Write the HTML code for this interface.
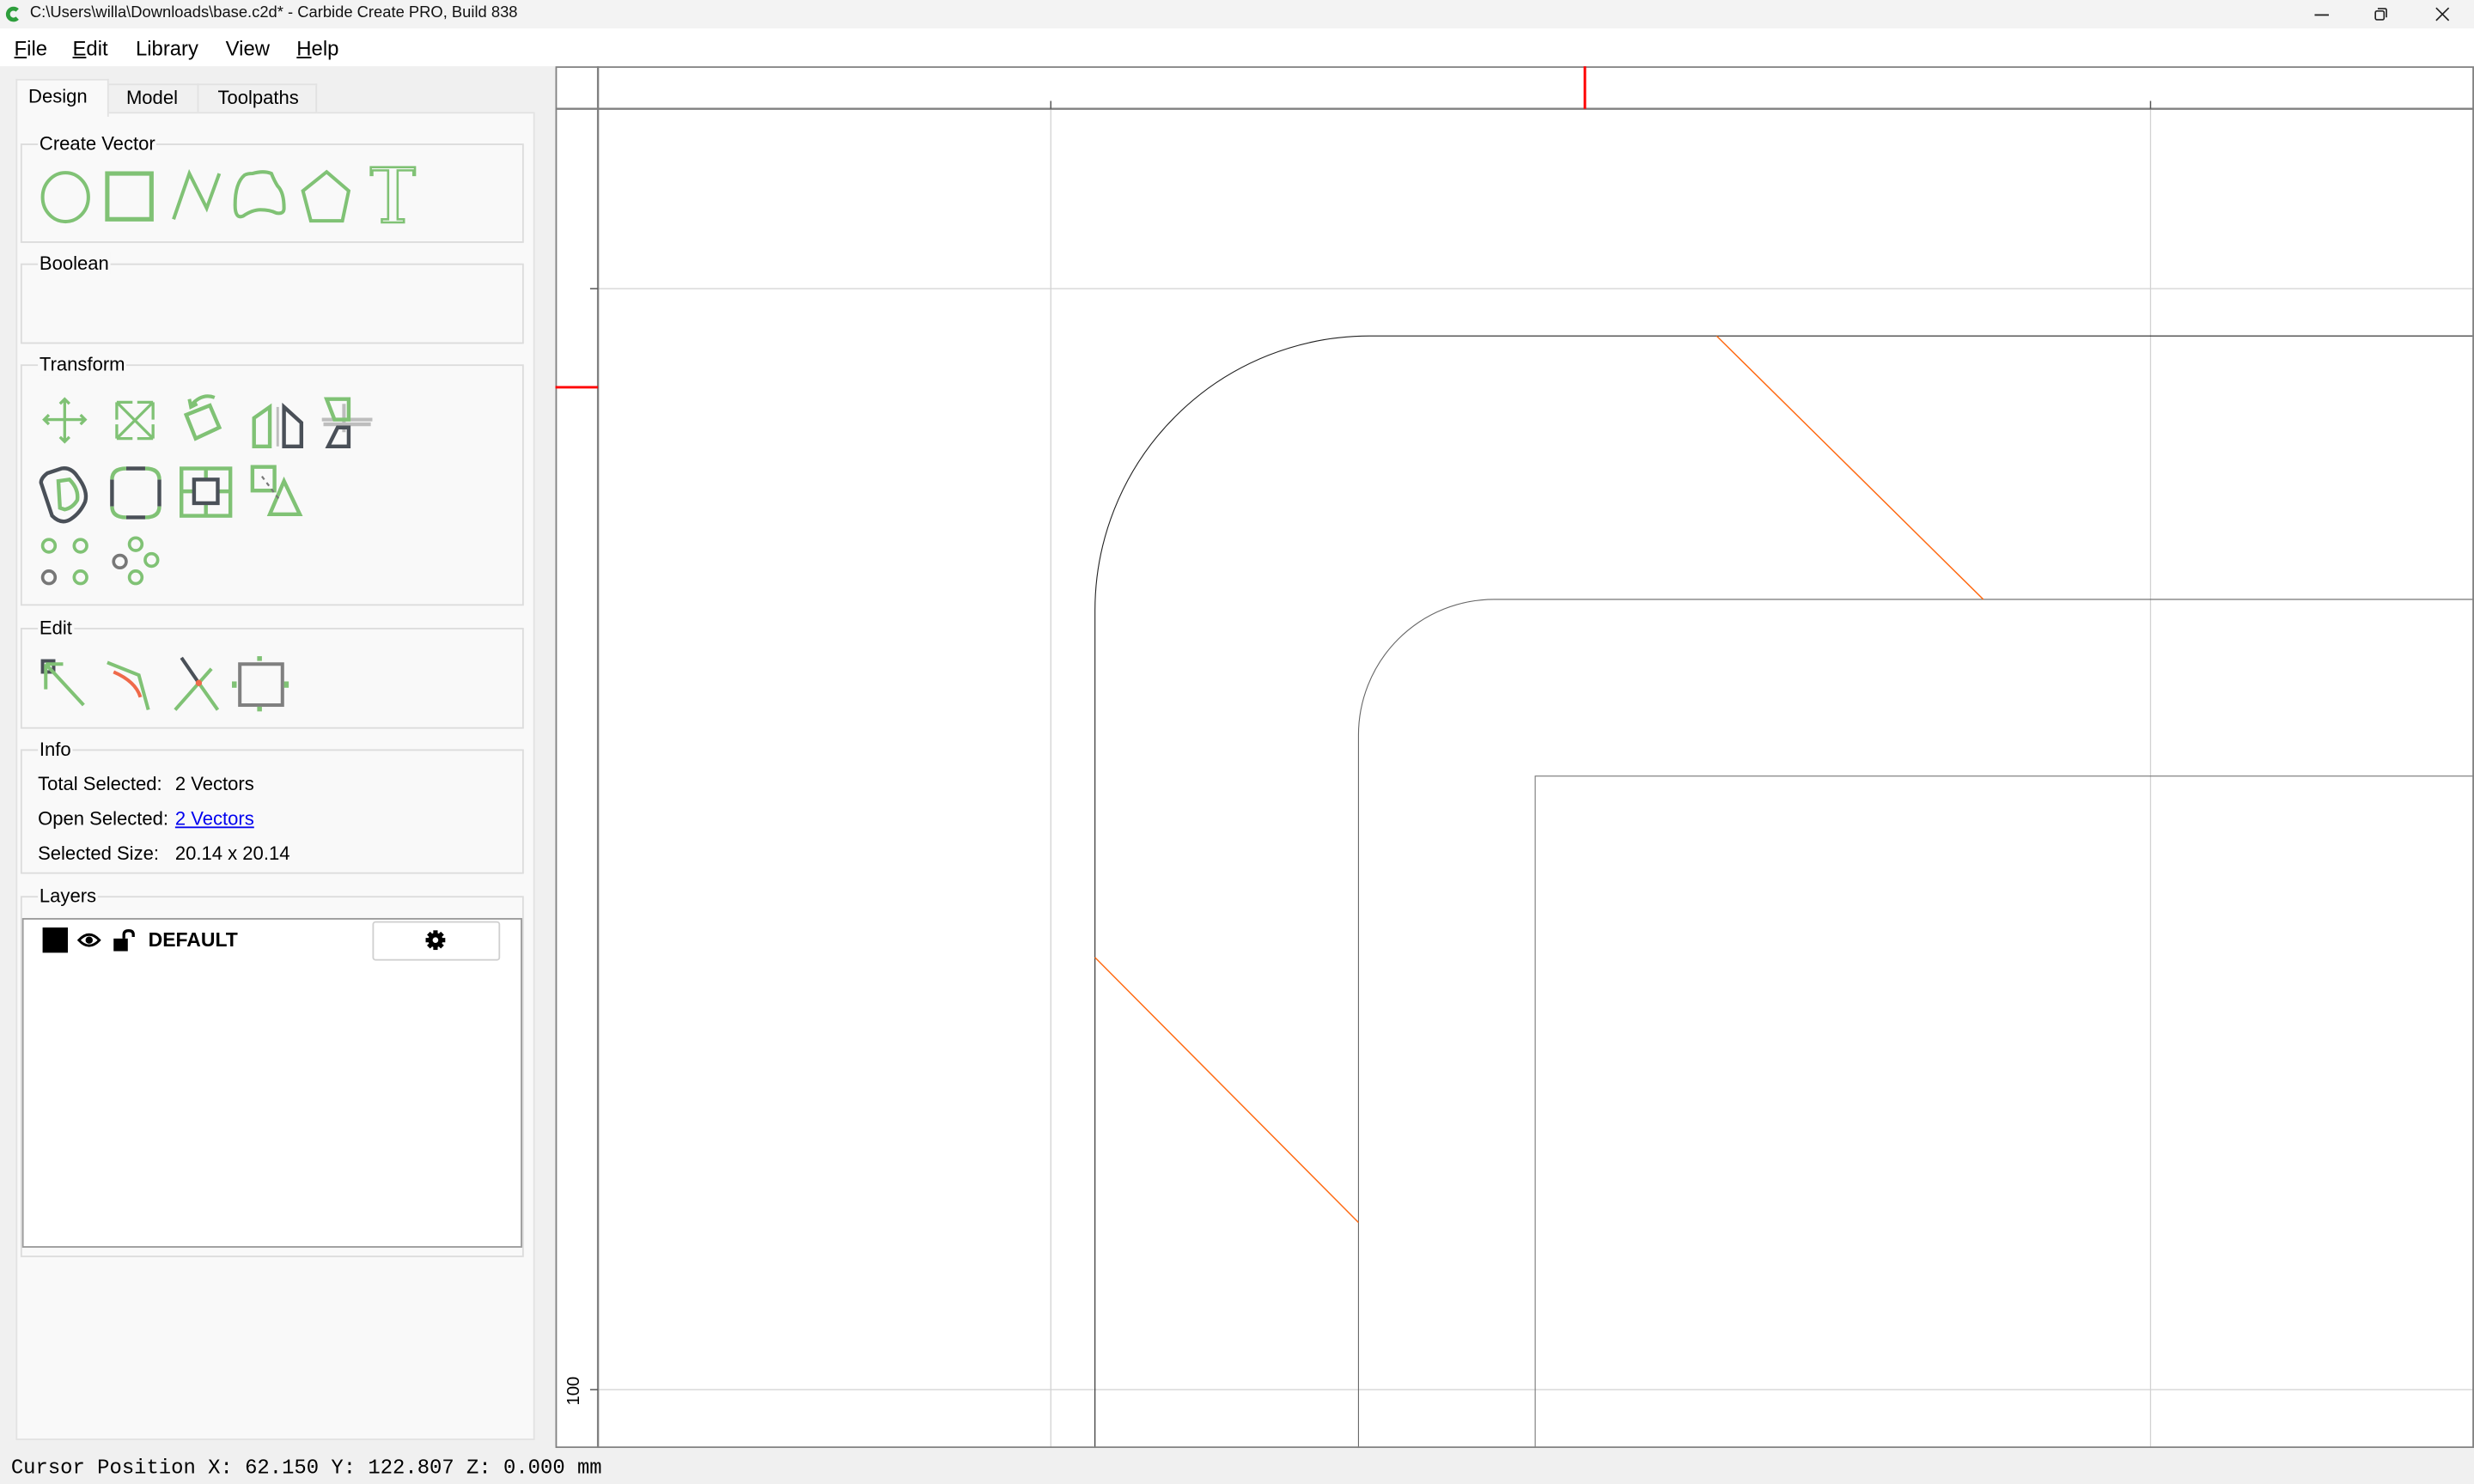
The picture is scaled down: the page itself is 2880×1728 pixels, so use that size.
<!DOCTYPE html>
<html><head><meta charset="utf-8">
<style>
html,body{margin:0;padding:0;width:2880px;height:1728px;overflow:hidden;background:#f0f0f0;}
#w{position:absolute;left:0;top:0;width:1568px;height:941px;transform:scale(1.83673);transform-origin:0 0;font-family:"Liberation Sans",sans-serif;color:#000;}
.abs{position:absolute;}
.t{position:absolute;font-size:12px;white-space:nowrap;}
.gb{position:absolute;left:13px;width:317px;border:1px solid #dcdcdc;background:#f9f9f9;}
.gbt{position:absolute;left:10px;top:-8px;background:#f9f9f9;padding:0 1px;font-size:12px;}
</style></head><body><div id="w">
<!-- title bar -->
<div class="abs" style="left:0;top:0;width:1568px;height:18px;background:#f3f3f3"></div>
<svg class="abs" style="left:3px;top:4px" width="10" height="10" viewBox="0 0 10 10"><path d="M8 2.5 A3.5 3.5 0 1 0 8 7.5" fill="none" stroke="#2e9e3c" stroke-width="2.6"/></svg>
<div class="t" style="left:19px;top:3px;font-size:10px;color:#111">C:\Users\willa\Downloads\base.c2d* - Carbide Create PRO, Build 838</div>
<div class="abs" style="left:1467px;top:9px;width:9px;height:1px;background:#222"></div>
<svg class="abs" style="left:1504px;top:4px" width="10" height="10" viewBox="0 0 10 10"><rect x="1.5" y="3" width="5.5" height="5.5" rx="1" fill="none" stroke="#222" stroke-width="0.9"/><path d="M3 1.5H7.5Q8.5 1.5 8.5 2.5V7" fill="none" stroke="#222" stroke-width="0.9"/></svg>
<svg class="abs" style="left:1543px;top:4px" width="10" height="10" viewBox="0 0 10 10"><path d="M1 1L9 9M9 1L1 9" stroke="#222" stroke-width="0.9"/></svg>
<!-- menu -->
<div class="abs" style="left:0;top:18px;width:1568px;height:24px;background:#fff"></div>
<div class="t" style="left:9px;top:23px;font-size:13px"><u>F</u>ile</div>
<div class="t" style="left:46px;top:23px;font-size:13px"><u>E</u>dit</div>
<div class="t" style="left:86px;top:23px;font-size:13px">Library</div>
<div class="t" style="left:143px;top:23px;font-size:13px">View</div>
<div class="t" style="left:188px;top:23px;font-size:13px"><u>H</u>elp</div>
<!-- tabs -->
<div class="abs" style="left:68px;top:53px;width:56px;height:18px;background:#f0f0f0;border:1px solid #e2e2e2;border-bottom:none"></div>
<div class="abs" style="left:125px;top:53px;width:74px;height:18px;background:#f0f0f0;border:1px solid #e2e2e2;border-bottom:none"></div>
<div class="abs" style="left:10px;top:71px;width:327px;height:840px;background:#f9f9f9;border:1px solid #e2e2e2"></div>
<div class="abs" style="left:10px;top:50px;width:57px;height:23px;background:#f9f9f9;border:1px solid #e2e2e2;border-bottom:none"></div>
<div class="t" style="left:18px;top:54px">Design</div>
<div class="t" style="left:80px;top:55px">Model</div>
<div class="t" style="left:138px;top:55px">Toolpaths</div>

<!-- Create Vector -->
<div class="gb" style="top:91px;height:61px"><div class="gbt">Create Vector</div></div>
<svg class="abs" style="left:0;top:0;z-index:2" width="345" height="470" viewBox="0 0 345 470" fill="none" stroke-linejoin="miter">
<g stroke="#80c275" stroke-width="2.2">
<ellipse cx="41.5" cy="125" rx="14.5" ry="15.5"/>
<rect x="68" y="110" width="28" height="29" stroke-width="2.8"/>
<path d="M110 139L120 110L131 132L139 110"/>
<path d="M155 111Q149 116 149 130Q149 139 154 137Q160 133 165 133Q171 133 175 135Q180 136 180 132Q180 122 176 118Q174 115 172 110Q167 108 160 110Q157 110 155 111Z"/>
<path d="M207 109L221 121L217 140H197L192 121Z"/>
<path d="M235 111V106H263V111H262V108H252V139H256V141H242V139H246V108H236V111Z" stroke-width="1.4"/>
</g>
<!-- transform row1 -->
<g stroke="#80c275" stroke-width="2.2">
<path d="M41 253V280M28 266H54M38 256L41 253L44 256M38 277L41 280L44 277M31 263L28 266L31 269M51 263L54 266L51 269" stroke-width="1.8"/>
<path d="M74 255V266M74 255H84M97 255H87M97 255V266M74 278V269M74 278H84M97 278V269M97 278H87M74 255L97 278M97 255L74 278" stroke-width="1.8"/>
<path d="M218 256V274M204 266H236" stroke="#bdbdbd"/>
<path d="M121 257Q128 249 136 252" />
<path d="M120 253L121 258L125 256" />
</g>
<g stroke-width="2.4">
<path d="M161 273V265L171 258V283H161Z" stroke="#80c275"/>
<path d="M176 258V283" stroke="#bdbdbd" stroke-width="1.6"/>
<path d="M180 258V283H191V268Z" stroke="#4a5058"/>
<path d="M205 269H235" stroke="#bdbdbd"/>
<path d="M207 253H221V266H212Z" stroke="#80c275"/>
<path d="M214 271H221V283H208Z" stroke="#4a5058"/>
</g>
<!-- row2 -->
<g stroke-width="2.4">
<path d="M30 300Q26 303 26 306L33 327Q39 333 45 329Q51 325 54 318Q56 311 49 302Q45 296 39 297Z" stroke="#4a5058"/>
<path d="M37 305L44 304Q50 310 49 317Q46 322 41 323L38 322Z" stroke="#80c275"/>
<path d="M80 297H92M80 328H92M71 304V321M101 304V321" stroke="#4a5058"/>
<path d="M71 304Q71 297 80 297M92 297Q101 297 101 304M101 321Q101 328 92 328M80 328Q71 328 71 321" stroke="#80c275"/>
<rect x="115" y="297" width="31" height="30" stroke="#80c275"/>
<path d="M130.5 297V304M130.5 320V327M115 311.5H122M139 311.5H146" stroke="#80c275"/>
<rect x="123" y="304" width="15" height="15" stroke="#4a5058"/>
<rect x="160" y="296" width="14" height="15" stroke="#80c275"/>
<path d="M180 305L190 326H171Z" stroke="#80c275"/>
<path d="M166 302L178 318" stroke="#777" stroke-width="1.2" stroke-dasharray="2.5 2.5"/>
</g>
<!-- row3 -->
<g stroke-width="2">
<circle cx="31" cy="346" r="4" stroke="#80c275"/><circle cx="51" cy="346" r="4" stroke="#80c275"/>
<circle cx="31" cy="366" r="4" stroke="#777"/><circle cx="51" cy="366" r="4" stroke="#80c275"/>
<circle cx="86" cy="345" r="4" stroke="#80c275"/><circle cx="76" cy="356" r="4" stroke="#777"/>
<circle cx="96" cy="355" r="4" stroke="#80c275"/><circle cx="86" cy="366" r="4" stroke="#80c275"/>
</g>
<!-- edit -->
<g stroke-width="2.2">
<rect x="27" y="419" width="7" height="7" stroke="#4a5058"/>
<path d="M29 421L53 447M29 421V437M29 421H40" stroke="#80c275"/>
<path d="M68 420L88 428L94 450" stroke="#80c275"/>
<path d="M72 426Q86 432 89 442" stroke="#ef6a4a"/>
<path d="M111 450L126 433L134 424M126 433L138 450" stroke="#80c275"/>
<path d="M126 433L115 417" stroke="#4a5058"/>
<circle cx="126" cy="433" r="2" fill="#ef6a4a" stroke="none"/>
<rect x="152" y="421" width="27" height="26" stroke="#808080"/>
<rect x="163" y="416" width="3" height="3" fill="#80c275" stroke="none"/>
<rect x="163" y="448" width="3" height="3" fill="#80c275" stroke="none"/>
<rect x="147" y="432" width="3" height="4" fill="#80c275" stroke="none"/>
<rect x="180" y="432" width="3" height="4" fill="#80c275" stroke="none"/>
</g>
</svg>
<svg class="abs" style="left:112px;top:248px;z-index:2" width="40" height="40" viewBox="0 0 40 40" fill="none"><path d="M6 15L21 9L27 23L12 30Z" stroke="#80c275" stroke-width="2.4"/></svg>

<div class="gb" style="top:167px;height:49px"><div class="gbt">Boolean</div></div>
<div class="gb" style="top:231px;height:151px"><div class="gbt">Transform</div></div>
<div class="gb" style="top:398px;height:62px"><div class="gbt">Edit</div></div>
<div class="gb" style="top:475px;height:77px"><div class="gbt">Info</div></div>
<div class="t" style="left:24px;top:490px">Total Selected:</div><div class="t" style="left:111px;top:490px">2 Vectors</div>
<div class="t" style="left:24px;top:512px">Open Selected:</div><div class="t" style="left:111px;top:512px;color:#0000ee;text-decoration:underline">2 Vectors</div>
<div class="t" style="left:24px;top:534px">Selected Size:</div><div class="t" style="left:111px;top:534px">20.14 x 20.14</div>
<div class="gb" style="top:568px;height:227px"><div class="gbt">Layers</div></div>
<div class="abs" style="left:14px;top:582px;width:315px;height:207px;background:#fff;border:1px solid #9a9a9a"></div>
<div class="abs" style="left:27px;top:588px;width:16px;height:16px;background:#000"></div>
<svg class="abs" style="left:49px;top:590px" width="15" height="12" viewBox="0 0 15 12"><path d="M1 6Q7.5 -1 14 6Q7.5 13 1 6Z" fill="none" stroke="#000" stroke-width="1.6"/><circle cx="7.5" cy="6" r="2.3" fill="#000"/></svg>
<svg class="abs" style="left:71px;top:588px" width="16" height="16" viewBox="0 0 16 16"><rect x="1" y="7" width="9" height="8" fill="#000"/><path d="M7.5 7V4.5Q7.5 2 10.5 2Q13.5 2 13.5 4.5V6" fill="none" stroke="#000" stroke-width="1.8"/></svg>
<div class="t" style="left:94px;top:589px;font-weight:bold;font-size:12.5px">DEFAULT</div>
<div class="abs" style="left:236px;top:584px;width:79px;height:23px;background:#fff;border:1px solid #d0d0d0;border-radius:2px"></div>
<svg class="abs" style="left:269px;top:589px" width="14" height="14" viewBox="0 0 14 14"><g fill="#000"><circle cx="7" cy="7" r="4.6"/><rect x="5.6" y="0.8" width="2.8" height="12.4"/><rect x="0.8" y="5.6" width="12.4" height="2.8"/><rect x="5.6" y="0.8" width="2.8" height="12.4" transform="rotate(45 7 7)"/><rect x="5.6" y="0.8" width="2.8" height="12.4" transform="rotate(-45 7 7)"/></g><circle cx="7" cy="7" r="1.8" fill="#fff"/></svg>

<!-- canvas -->
<svg class="abs" style="left:352px;top:42px" width="1216" height="876" viewBox="352 42 1216 876">
<rect x="352" y="42" width="1216" height="876" fill="#fff"/>
<g stroke="#d2d2d2" stroke-width="0.7">
<path d="M666 69V918M1363 69V918M379 183H1568M379 881H1568"/>
</g>
<g fill="none" stroke-width="0.6">
<path d="M694 918V387A174 174 0 0 1 868 213H1568" stroke="#222"/>
<path d="M861 918V466A86 86 0 0 1 947 380H1568" stroke="#666"/>
<path d="M973 918V492H1568" stroke="#777"/>
<path d="M1088 213L1257 380M694 607L861 775" stroke="#ff6a13" stroke-width="0.8"/>
</g>
<rect x="352.5" y="42.5" width="1215" height="875" fill="none" stroke="#808080" stroke-width="1"/>
<path d="M352 69H1568" stroke="#808080" stroke-width="1.3"/>
<path d="M379 42V918" stroke="#808080" stroke-width="1.3"/>
<path d="M666 64V69M1363 64V69M374 183H379M374 881H379" stroke="#555" stroke-width="0.8"/>
<path d="M1004.5 42V69" stroke="#f00" stroke-width="1.6"/>
<path d="M352 245.5H379" stroke="#f00" stroke-width="1.6"/>
<text x="0" y="0" transform="translate(367 891) rotate(-90)" font-family="Liberation Sans, sans-serif" font-size="11" fill="#000">100</text>
</svg>
<div class="t" style="left:7px;top:923px;font-family:'Liberation Mono',monospace;font-size:13px">Cursor Position X: 62.150 Y: 122.807 Z: 0.000 mm</div>
</div></body></html>
